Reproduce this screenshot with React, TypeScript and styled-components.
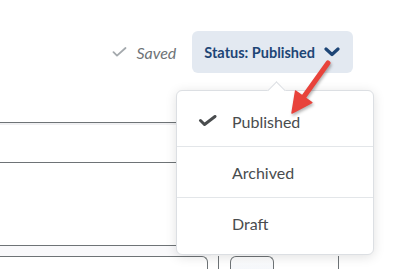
import React from "react";
import styled, { createGlobalStyle } from "styled-components";

// Type
interface ItemProps {
  $first?: boolean;
}

const items = [
  { label: "Published", checked: true },
  { label: "Archived", checked: false },
  { label: "Draft", checked: false },
];

function App() {
  return (
    <Page>
      <GlobalStyle />
      <Header>
        <SavedState>
          <svg width="15" height="10" viewBox="0 0 15 10">
            <path
              d="M1.5 5.2 L5 8.6 L13.5 1"
              fill="none"
              stroke="#a4a9ad"
              strokeWidth="1.8"
              strokeLinecap="round"
              strokeLinejoin="round"
            />
          </svg>
          <SavedText>Saved</SavedText>
        </SavedState>
        <StatusButton>
          Status: Published
          <svg width="16" height="10" viewBox="0 0 16 10">
            <path
              d="M2 2 L8 7.5 L14 2"
              fill="none"
              stroke="#1d4576"
              strokeWidth="3.2"
              strokeLinecap="round"
              strokeLinejoin="round"
            />
          </svg>
        </StatusButton>
      </Header>

      <Form>
        <TitleInput />
        <DescriptionArea />
        <Band />
        <BottomRow>
          <WideBox />
          <Rule />
          <SmallButton />
          <Spacer />
          <Rule />
        </BottomRow>
      </Form>

      <Menu>
        <Pointer />
        {items.map((item, i) => (
          <MenuItem key={item.label} $first={i === 0}>
            <CheckSlot>
              {item.checked && (
                <svg width="20" height="12" viewBox="0 0 20 12">
                  <path
                    d="M2.5 5.5 L6.5 9.5 L17 1.5"
                    fill="none"
                    stroke="#494c4e"
                    strokeWidth="3"
                    strokeLinecap="round"
                    strokeLinejoin="round"
                  />
                </svg>
              )}
            </CheckSlot>
            {item.label}
          </MenuItem>
        ))}
      </Menu>

      <Arrow width="60" height="66" viewBox="0 0 60 66">
        <path
          d="M48 8 L24 41.5"
          stroke="#e8433b"
          strokeWidth="5"
          strokeLinecap="round"
        />
        <path
          d="M12 58 L31.8 47.6 L15.6 36 Z"
          fill="#e8433b"
          stroke="#e8433b"
          strokeWidth="1.5"
          strokeLinejoin="round"
        />
      </Arrow>
    </Page>
  );
}

export default App;

const GlobalStyle = createGlobalStyle`
  html, body {
    margin: 0;
    padding: 0;
    background: #ffffff;
    font-family: Lato, "Open Sans", sans-serif;
    overflow: hidden;
  }
`;

const Page = styled.div`
  position: relative;
  width: 420px;
  height: 269px;
  overflow: hidden;
  background: #ffffff;
`;

const Header = styled.div`
  display: flex;
  justify-content: flex-end;
  align-items: center;
  gap: 16px;
  padding: 31px 67px 0 0;
  height: 42px;
`;

const SavedState = styled.div`
  display: flex;
  align-items: center;
  gap: 9px;
`;

const SavedText = styled.span`
  font-style: italic;
  font-size: 16px;
  color: #6e7376;
`;

const StatusButton = styled.button`
  display: flex;
  align-items: center;
  gap: 9px;
  height: 42px;
  padding: 0 13px 0 12px;
  border: none;
  border-radius: 6px;
  background: #e3e9f1;
  color: #1d4576;
  font-family: Lato, sans-serif;
  font-weight: 700;
  font-size: 14.5px;
`;

const Form = styled.div`
  display: flex;
  flex-direction: column;
  width: 215px;
  margin-top: 49px;
  margin-left: -4px;
`;

const TitleInput = styled.div`
  height: 39px;
  border-top: 1px solid #6e7376;
  border-bottom: 1px solid #6e7376;
  box-shadow: inset 0 2px 0 #f0f0f2;
`;

const DescriptionArea = styled.div`
  height: 82px;
  border-bottom: 1px solid #6e7376;
`;

const Band = styled.div`
  height: 10px;
  background: #f9f9fb;
`;

const BottomRow = styled.div`
  display: flex;
  align-items: flex-start;
  width: 360px;
`;

const WideBox = styled.div`
  width: 211px;
  height: 20px;
  border-top: 1px solid #6e7376;
  border-right: 1px solid #6e7376;
  border-top-right-radius: 6px;
  flex-shrink: 0;
`;

const Rule = styled.div`
  width: 1px;
  height: 20px;
  margin: 0 10px;
  background: #6e7376;
  flex-shrink: 0;
`;

const SmallButton = styled.div`
  width: 42px;
  height: 20px;
  margin-left: 1px;
  border: 1px solid #6e7376;
  border-bottom: none;
  border-radius: 6px 6px 0 0;
  background: linear-gradient(#ffffff, #eef2f8);
  flex-shrink: 0;
`;

const Spacer = styled.div`
  width: 54px;
  flex-shrink: 0;
`;

const Menu = styled.div`
  position: absolute;
  left: 176px;
  top: 90px;
  width: 198px;
  padding: 5px 0 6px;
  box-sizing: border-box;
  background: #ffffff;
  border: 1px solid #dcdfe3;
  border-radius: 6px;
  box-shadow: 0 2px 12px rgba(0, 0, 0, 0.12);
`;

const Pointer = styled.div`
  position: absolute;
  left: 93px;
  top: -7px;
  width: 12px;
  height: 12px;
  background: #ffffff;
  border-left: 1px solid #dcdfe3;
  border-top: 1px solid #dcdfe3;
  transform: rotate(45deg);
`;

const MenuItem = styled.div<ItemProps>`
  display: flex;
  align-items: center;
  height: 50px;
  font-size: 16px;
  color: #494c4e;
  border-top: ${(props) => (props.$first ? "none" : "1px solid #e3e6e9")};
`;

const CheckSlot = styled.div`
  display: flex;
  align-items: center;
  width: 34px;
  margin-left: 21px;
`;

const Arrow = styled.svg`
  position: absolute;
  left: 280px;
  top: 55px;
  filter: drop-shadow(1px 2px 1.5px rgba(0, 0, 0, 0.3));
`;
